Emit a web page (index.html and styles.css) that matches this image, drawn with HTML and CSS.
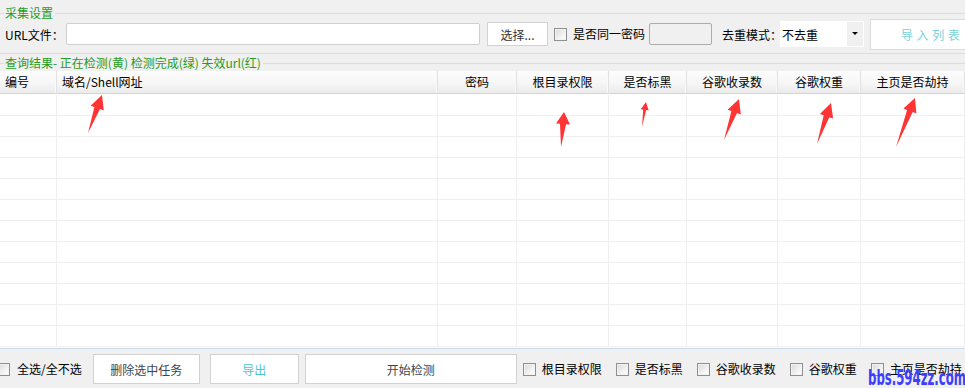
FILE: index.html
```html
<!DOCTYPE html>
<html lang="zh-CN">
<head>
  <meta charset="UTF-8">
  <title>采集设置</title>
  <link rel="stylesheet" href="styles.css">
</head>
<body>
  <div class="app">
    <div class="group-head"><span>采集设置</span></div>
    <div class="settings">
      <label class="lbl lbl-url">URL文件：</label>
      <input class="field url">
      <button class="btn pick">选择...</button>
      <span class="cb cb-same"></span><span class="cb-text">是否同一密码</span>
      <input class="field pwd" disabled>
      <span class="lbl lbl-mode">去重模式：</span>
      <div class="select"><span>不去重</span><i class="caret"></i></div>
      <button class="btn import">导入列表</button>
    </div>

    <div class="group-head second"><span>查询结果- 正在检测(黄) 检测完成(绿) 失效url(红)</span></div>
    <div class="grid-wrap">
      <div class="row head">
        <div class="cell left">编号</div>
        <div class="cell left">域名/Shell网址</div>
        <div class="cell">密码</div>
        <div class="cell">根目录权限</div>
        <div class="cell">是否标黑</div>
        <div class="cell">谷歌收录数</div>
        <div class="cell">谷歌权重</div>
        <div class="cell">主页是否劫持</div>
      </div>
      <div class="grid-body">
        <div class="row"><div class="cell"></div><div class="cell"></div><div class="cell"></div><div class="cell"></div><div class="cell"></div><div class="cell"></div><div class="cell"></div><div class="cell"></div></div>
        <div class="row"><div class="cell"></div><div class="cell"></div><div class="cell"></div><div class="cell"></div><div class="cell"></div><div class="cell"></div><div class="cell"></div><div class="cell"></div></div>
        <div class="row"><div class="cell"></div><div class="cell"></div><div class="cell"></div><div class="cell"></div><div class="cell"></div><div class="cell"></div><div class="cell"></div><div class="cell"></div></div>
        <div class="row"><div class="cell"></div><div class="cell"></div><div class="cell"></div><div class="cell"></div><div class="cell"></div><div class="cell"></div><div class="cell"></div><div class="cell"></div></div>
        <div class="row"><div class="cell"></div><div class="cell"></div><div class="cell"></div><div class="cell"></div><div class="cell"></div><div class="cell"></div><div class="cell"></div><div class="cell"></div></div>
        <div class="row"><div class="cell"></div><div class="cell"></div><div class="cell"></div><div class="cell"></div><div class="cell"></div><div class="cell"></div><div class="cell"></div><div class="cell"></div></div>
        <div class="row"><div class="cell"></div><div class="cell"></div><div class="cell"></div><div class="cell"></div><div class="cell"></div><div class="cell"></div><div class="cell"></div><div class="cell"></div></div>
        <div class="row"><div class="cell"></div><div class="cell"></div><div class="cell"></div><div class="cell"></div><div class="cell"></div><div class="cell"></div><div class="cell"></div><div class="cell"></div></div>
        <div class="row"><div class="cell"></div><div class="cell"></div><div class="cell"></div><div class="cell"></div><div class="cell"></div><div class="cell"></div><div class="cell"></div><div class="cell"></div></div>
        <div class="row"><div class="cell"></div><div class="cell"></div><div class="cell"></div><div class="cell"></div><div class="cell"></div><div class="cell"></div><div class="cell"></div><div class="cell"></div></div>
        <div class="row"><div class="cell"></div><div class="cell"></div><div class="cell"></div><div class="cell"></div><div class="cell"></div><div class="cell"></div><div class="cell"></div><div class="cell"></div></div>
        <div class="row"><div class="cell"></div><div class="cell"></div><div class="cell"></div><div class="cell"></div><div class="cell"></div><div class="cell"></div><div class="cell"></div><div class="cell"></div></div>
      </div>
    </div>

    <div class="actions">
      <span class="cb cb-all"></span><span class="cb-text">全选/全不选</span>
      <button class="btn del">删除选中任务</button>
      <button class="btn export">导出</button>
      <button class="btn start">开始检测</button>
      <div class="opt first"><span class="cb"></span><span class="cb-text">根目录权限</span></div>
      <div class="opt"><span class="cb"></span><span class="cb-text">是否标黑</span></div>
      <div class="opt"><span class="cb"></span><span class="cb-text">谷歌收录数</span></div>
      <div class="opt"><span class="cb"></span><span class="cb-text">谷歌权重</span></div>
      <div class="opt"><span class="cb"></span><span class="cb-text">主页是否劫持</span></div>
    </div>

    <!-- red annotation arrows -->
    <svg class="arrows" width="965" height="388" viewBox="0 0 965 388">
      <polygon points="88,133 100,109.1 103.8,110.5 102,95 90.6,105.7 94.4,107.1"/>
      <polygon points="561,147 566,124.3 570,124.6 564,112 556,123.4 560,123.7"/>
      <polygon points="642,127 646.2,110.1 648.7,110.5 646,102 640.7,109.3 643.2,109.7"/>
      <polygon points="724,140 737,113.1 740.8,114.5 739,99 727.6,109.7 731.4,111.1"/>
      <polygon points="817,144 829.3,117.3 833.1,118.6 831,103 819.9,114 823.7,115.3"/>
      <polygon points="896,147 912.7,112.1 916.4,113.5 915,98 903.4,108.5 907.1,109.9"/>
    </svg>
    <div class="watermark">bbs.594zz.com</div>
  </div>
</body>
</html>
```

FILE: styles.css
```css
* {
  margin: 0; padding: 0; box-sizing: border-box;
}
body {
  background: #f0f0f0;
  font-family: "Noto Sans CJK SC", "Microsoft YaHei", sans-serif;
  font-size: 12px;
  color: #000;
  overflow: hidden;
}
.app {
  position: relative;
  width: 965px;
  height: 388px;
  overflow: hidden;
}

/* group titles */
.group-head {
  display: flex;
  align-items: center;
  height: 16px;
  margin-top: 5px;
  color: #259b25;
  line-height: 16px;
  white-space: nowrap;
}
.group-head::before {
  content: '';
  width: 4px;
  border-top: 1px solid #d5dee6;
}
.group-head::after {
  content: '';
  flex: 1;
  border-top: 1px solid #d5dee6;
}
.group-head span { padding: 0 2px 0 1px; }
.group-head.second { margin-top: 1px; }

/* settings row */
.settings {
  display: flex;
  align-items: center;
  height: 33px;
  padding-bottom: 6px;
  border-bottom: 1px solid #d5dee6;
  white-space: nowrap;
}
.settings > *, .actions > *, .opt > * { flex: none; }
.lbl { display: block; }
.lbl-url { margin-left: 5px; width: 61px; }
.lbl-mode { margin-left: 10px; width: 58px; }
.field {
  height: 22px;
  border: 1px solid #cfcfcf;
  border-radius: 2px;
  background: #fff;
  outline: none;
}
.field.url { width: 414px; }
.field.pwd {
  margin-left: 4px;
  width: 63px;
  background: #f0f0f0;
  border-color: #acacac;
}
.btn {
  font-family: inherit;
  font-size: 12px;
  background: #fff;
  border: 1px solid #d2d2d2;
  color: #3c4650;
  cursor: pointer;
}
.btn.pick { margin-left: 7px; width: 61px; height: 24px; color: #333; }
.btn.import {
  margin-left: 6px;
  width: 116px;
  height: 31px;
  text-align: left;
  padding-left: 30px;
  letter-spacing: 3.6px;
  color: #79d2d8;
  border-color: #dcdcdc;
}
.cb {
  display: block;
  width: 13px;
  height: 13px;
  border: 1px solid #8e8f8f;
  background: linear-gradient(135deg, #d8d8d8, #f7f7f7 70%, #fff);
  box-shadow: inset 0 0 0 1px #f2f2f2;
}
.cb-same { margin-left: 6px; }
.cb-text { margin-left: 6px; line-height: 16px; }
.select {
  display: flex;
  width: 84px;
  height: 26px;
  background: #fff;
  border: 1px solid #fff;
  align-items: center;
}
.select span { flex: 1; padding-left: 1px; }
.caret {
  position: relative;
  width: 16px;
  height: 24px;
  background: #f0f0f0;
}
.caret::after {
  content: '';
  position: absolute;
  left: 5px;
  top: 10px;
  border-left: 3px solid transparent;
  border-right: 3px solid transparent;
  border-top: 3px solid #000;
}

/* result grid */
.grid-wrap {
  height: 278px;
  background: #fff;
  border-bottom: 1px solid #c9d9e6;
  overflow: hidden;
}
.row {
  display: grid;
  grid-template-columns: 57px 381px 79px 92px 78px 91px 83px 1fr;
  height: 21px;
  border-bottom: 1px solid #efefef;
}
.row .cell { border-right: 1px solid #efefef; }
.row.head {
  height: 23px;
  border-bottom: 1px solid #d5d5d5;
  background: linear-gradient(#fdfdfd, #f6f6f6 55%, #ebebeb);
}
.row.head .cell {
  line-height: 22px;
  text-align: center;
  border-right: 1px solid #e1e1e1;
  box-shadow: inset -1px 0 0 #fafafa;
  white-space: nowrap;
}
.row.head .cell.left { text-align: left; padding-left: 5px; }
.grid-body { padding-top: 1px; }

/* bottom actions */
.actions {
  display: flex;
  align-items: center;
  height: 39px;
  padding-top: 1px;
  white-space: nowrap;
}
.cb-all { margin-left: -3px; }
.actions .cb-all + .cb-text { margin-left: 7px; }
.actions .btn { height: 30px; }
.btn.del { margin-left: 11px; width: 107px; }
.btn.export { margin-left: 10px; width: 89px; color: #4cc5cf; }
.btn.start { margin-left: 6px; width: 212px; }
.opt { display: flex; align-items: center; margin-left: 14px; }
.opt.first { margin-left: 6px; }

/* overlays */
.arrows {
  position: absolute;
  left: 0;
  top: 0;
  pointer-events: none;
}
.arrows polygon { fill: #ff3434; }
.watermark {
  position: absolute;
  left: 868px;
  top: 367px;
  font-family: "DejaVu Sans Condensed", "DejaVu Sans", sans-serif;
  font-weight: bold;
  font-size: 21px;
  line-height: 22px;
  color: #3d3dff;
  transform: scaleX(0.62);
  transform-origin: left top;
  white-space: nowrap;
}
```
